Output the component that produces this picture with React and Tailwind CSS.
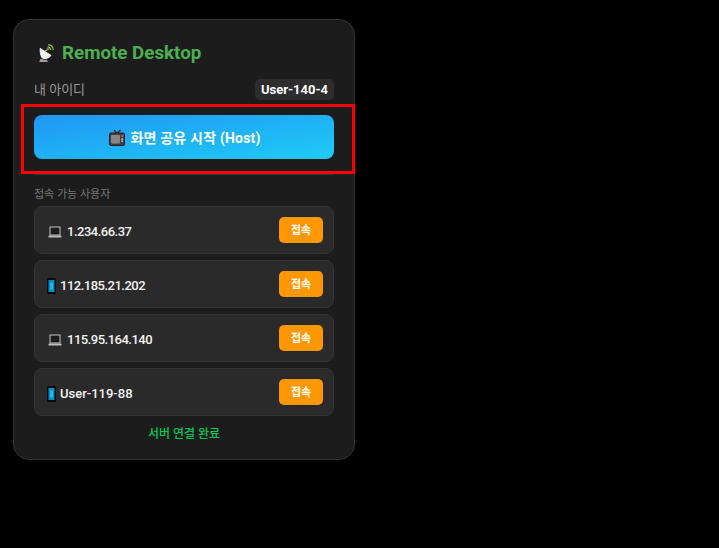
const font = { fontFamily: 'Roboto, "Noto Sans CJK KR", sans-serif' };

function Dish() {
  return (
    <svg width="18" height="19" viewBox="0 0 18 19" className="shrink-0">
      <path d="M4 14.500h7l1.500 4h-10z" fill="#a89a97" stroke="#0c0c0c" strokeWidth=".8" />
      <path d="M3.500 3 L16 11 C14.500 14 11 16 7.500 15.500 C4 14.500 2.500 8 3.500 3z" fill="#f3f4f5" stroke="#0c0c0c" strokeWidth=".8" />
      <path d="M9 7.500 L12 5" stroke="#bdbdbd" strokeWidth="1.100" />
      <path d="M11.500 2.800a3.500 3.500 0 0 1 3.200 3.200M12 .6a6 6 0 0 1 5.400 5.400" fill="none" stroke="#8bb92f" strokeWidth="1.200" />
      <circle cx="12" cy="5" r="1.300" fill="#6f8a2a" />
    </svg>
  );
}
function Tv() {
  return (
    <svg width="16" height="17" viewBox="0 0 16 17" className="shrink-0">
      <path d="M5 1l3 3.500L11.500 1" fill="none" stroke="#222" strokeWidth="1.300" />
      <rect x=".5" y="4" width="15" height="12.500" rx="1.500" fill="#3a3f44" stroke="#1a2230" />
      <rect x="2" y="6" width="9" height="8.500" rx="1" fill="#8a8683" />
      <rect x="12.200" y="6" width="2" height="2" fill="#e0504a" />
      <rect x="12.200" y="9.500" width="2" height="1.300" fill="#c9ced3" />
      <rect x="12.200" y="11.500" width="2" height="1.300" fill="#c9ced3" />
    </svg>
  );
}
function Laptop() {
  return (
    <svg width="14" height="12" viewBox="0 0 14 12" className="shrink-0">
      <rect x="2" y="1" width="10" height="8" fill="#1a1c1e" stroke="#c4c4c4" strokeWidth="1" />
      <rect x=".5" y="9.500" width="13" height="2" rx=".5" fill="#bcbcbc" />
    </svg>
  );
}
function Phone() {
  return (
    <svg width="9" height="16" viewBox="0 0 9 16" className="shrink-0">
      <rect x="0" y="0" width="9" height="16" rx="1.500" fill="#08090a" />
      <rect x="1.500" y="2" width="6" height="12" fill="#0a8fc4" />
      <rect x="3" y="4.500" width="3" height="7" fill="#22b4e6" />
    </svg>
  );
}

const peers = [
  { name: "1.234.66.37", kind: "laptop", tracking: "tracking-[-0.5px]" },
  { name: "112.185.21.202", kind: "phone", tracking: "tracking-[-0.5px]" },
  { name: "115.95.164.140", kind: "laptop", tracking: "tracking-[-0.5px]" },
  { name: "User-119-88", kind: "phone", tracking: "tracking-normal" },
];

function Peer({ name, kind, tracking }) {
  return (
    <div className="flex h-[48px] items-center justify-between rounded-lg border border-[#333333] bg-[#2a2a2a] pl-[12px] pr-[10px]">
      <div className="flex items-center pt-[3px] text-[13px] font-medium text-[#f4f4f4]">
        {kind === "laptop" ? (
          <span className="ml-[1px] mr-[5px] flex w-[14px] justify-center"><Laptop /></span>
        ) : (
          <span className="mr-[4px] flex w-[9px] justify-center"><Phone /></span>
        )}
        <span className={tracking}>{name}</span>
      </div>
      <button className="h-[26px] w-[44px] rounded-[5px] bg-[#ff9800] pt-[3px] text-[11px] font-bold text-white">접속</button>
    </div>
  );
}

export default function App() {
  return (
    <div className="relative h-[548px] w-[719px] overflow-hidden bg-black" style={font}>
      <div className="absolute left-[13px] top-[19px] h-[441px] w-[342px] rounded-2xl border border-[#333333] bg-[#1c1c1c] px-[20px] pt-[20px]">
        <div className="flex h-[26px] items-center gap-[8px] pl-[2px] text-[18.750px] leading-none font-bold text-[#4caf50]">
          <Dish />
          <span>Remote Desktop</span>
        </div>
        <div className="mt-[13px] flex h-[21px] items-center justify-between">
          <span className="text-[13px] text-[#9a9a9a]">내 아이디</span>
          <span className="flex h-[21px] items-center rounded-[5px] bg-[#2d2d2d] px-[6px] text-[13px] font-bold text-white">User-140-4</span>
        </div>
        <button className="mt-[15px] flex h-[44px] w-full items-center justify-center gap-[5px] rounded-lg bg-gradient-to-br from-[#2196f3] to-[#21cbf6] pl-[2px] text-[14px] font-bold tracking-[0.2px] text-white">
          <Tv />
          <span className="pt-[2px]">화면 공유 시작 (Host)</span>
        </button>
        <div className="mt-[15px] h-px bg-[#333333]" />
        <div className="mt-[12px] h-[16px] text-[11px] leading-[16px] text-[#777777]">접속 가능 사용자</div>
        <div className="mt-[3px] flex flex-col gap-[6px]">
          {peers.map((p) => (
            <Peer key={p.name} {...p} />
          ))}
        </div>
        <div className="mt-[9px] text-center text-[12px] font-medium text-[#00c853]">서버 연결 완료</div>
      </div>
      <div className="pointer-events-none absolute left-[21px] top-[104px] h-[70px] w-[334px] border-[3px] border-[#ff0000]" />
    </div>
  );
}
